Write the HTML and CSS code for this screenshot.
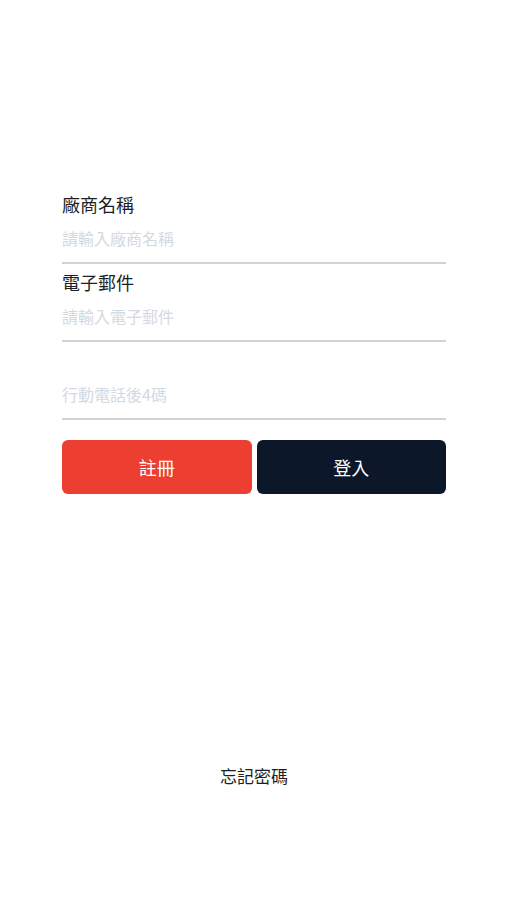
FILE: index.html
```html
<!DOCTYPE html>
<html lang="zh-Hant">
<head>
    <meta charset="UTF-8">
    <meta name="viewport" content="width=device-width, initial-scale=1.0">
    <title>登入</title>
    <link rel="stylesheet" href="styles.css">
</head>
<body>
    <div class="container">
        <form class="login-form">
            <div class="field">
                <label for="company">廠商名稱</label>
                <input type="text" id="company" placeholder="請輸入廠商名稱">
            </div>
            <div class="field">
                <label for="email">電子郵件</label>
                <input type="email" id="email" placeholder="請輸入電子郵件">
            </div>
            <div class="field">
                <label for="phone"></label>
                <input type="password" id="phone" placeholder="行動電話後4碼">
            </div>
            <div class="actions">
                <button type="button" class="btn btn-register">註冊</button>
                <button type="submit" class="btn btn-login">登入</button>
            </div>
        </form>
        <a class="forgot" href="#">忘記密碼</a>
    </div>
</body>
</html>
```

FILE: styles.css
```css
body {
    font-family: "Noto Sans CJK TC", "Noto Sans", sans-serif;
    background-color: #fff;
    margin: 0;
}

.container {
    padding: 192px 61px 0 62px;
    display: flex;
    flex-direction: column;
}

.field {
    display: flex;
    flex-direction: column;
    margin-bottom: 6px;
}

.field label {
    font-size: 18px;
    line-height: 24px;
    height: 24px;
    margin-bottom: 2px;
    color: #1c1f24;
}

.field input {
    height: 40px;
    padding: 0 0 4px 0;
    border: none;
    border-bottom: 2px solid #d3d3d3;
    font-family: inherit;
    font-size: 16px;
    color: #333;
    outline: none;
    box-sizing: content-box;
}

.field input::placeholder {
    color: #d4d9df;
}

.actions {
    display: flex;
    gap: 5px;
    margin-top: 20px;
}

.btn {
    flex: 1;
    height: 54px;
    border: none;
    border-radius: 6px;
    color: #fff;
    font-family: inherit;
    font-size: 18px;
    cursor: pointer;
}

.btn-register {
    background-color: #ec3f32;
}

.btn-login {
    background-color: #0c1829;
}

.forgot {
    align-self: center;
    margin-top: 270px;
    font-size: 17px;
    line-height: 24px;
    color: #1c1f24;
    text-decoration: none;
}
```
